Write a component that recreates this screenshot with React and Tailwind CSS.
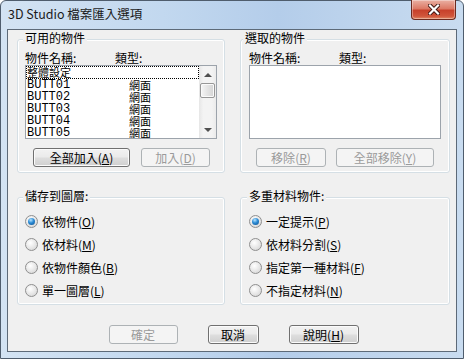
import React from "react";

const U = ({ c }) => (
  <>
    (<span className="underline underline-offset-[1px]">{c}</span>)
  </>
);

const Btn = ({ children, disabled, className = "" }) => (
  <div
    className={`flex h-[19px] items-center justify-center rounded-[3px] border text-[12px] leading-none ${
      disabled
        ? "border-[#adb2b5] bg-[#f4f4f4] text-[#9a9a9a]"
        : "border-[#707070] bg-[linear-gradient(#f2f2f2_0%,#ebebeb_45%,#dddddd_55%,#cfcfcf_100%)] text-black shadow-[inset_0_0_0_1px_#fbfbfb]"
    } ${className}`}
  >
    {children}
  </div>
);

const Group = ({ title, titleClass = "", className = "", children }) => (
  <div className={`rounded-[3px] border border-[#d5dfe5] shadow-[inset_0_0_0_1px_#ffffff] ${className}`}>
    <div className={`-mt-[9px] w-fit bg-[#f0f0f0] px-[2px] text-[12px] leading-[14px] ${titleClass}`}>{title}</div>
    {children}
  </div>
);

const Radio = ({ checked, children }) => (
  <div className="flex h-[23px] items-center">
    <span className="flex h-[13px] w-[13px] items-center justify-center rounded-full border border-[#8f8f8f] bg-[radial-gradient(circle_at_40%_35%,#ffffff_0%,#e8e8e8_50%,#cfcfcf_100%)]">
      {checked && (
        <span className="h-[7px] w-[7px] rounded-full bg-[radial-gradient(circle_at_40%_30%,#b7e4ff_0%,#2a8ad4_45%,#0f4f8c_100%)]" />
      )}
    </span>
    <span className="ml-[4px] text-[12px] leading-[14px]">{children}</span>
  </div>
);

const Scrollbar = () => (
  <div className="flex h-full w-[17px] flex-col items-center bg-[linear-gradient(90deg,#e6e6e6,#f3f3f3_25%,#f3f3f3_75%,#ebebeb)]">
    <div className="flex h-[17px] w-full items-center justify-center">
      <span className="h-0 w-0 border-x-[4px] border-b-[4px] border-x-transparent border-b-[#505050]" />
    </div>
    <div className="h-[15px] w-[15px] rounded-[2px] border border-[#979797] bg-[linear-gradient(90deg,#f6f6f6,#e4e4e4_50%,#d4d4d4)] shadow-[inset_0_0_0_1px_#fafafa]" />
    <div className="flex-1" />
    <div className="flex h-[17px] w-full items-center justify-center">
      <span className="h-0 w-0 border-x-[4px] border-t-[4px] border-x-transparent border-t-[#505050]" />
    </div>
  </div>
);

const rows = ["BUTT01", "BUTT02", "BUTT03", "BUTT04", "BUTT05"];

const Header = () => (
  <div className="mt-[7px] flex h-[12px] text-[12px] leading-[12px]">
    <span className="w-[90px]">物件名稱:</span>
    <span>類型:</span>
  </div>
);

export default function App() {
  return (
    <div className="flex h-[359px] w-[464px] flex-col rounded-t-[6px] border border-[#4f5d6d] bg-[linear-gradient(90deg,#d3e3f3_0%,#c2d8ef_35%,#b4cdea_60%,#c9dcf0_100%)] px-[6px] pb-[6px] font-['Noto_Sans_CJK_TC',sans-serif] text-black">
      <div className="flex h-[28px] items-start">
        <div className="pl-[1px] pt-[6px] text-[12.5px] leading-[14px] text-[#1b1b1b]">3D Studio 檔案匯入選項</div>
        <div className="-mt-[1px] ml-auto mr-[1px] flex h-[20px] w-[45px] items-center justify-center rounded-b-[4px] border border-t-0 border-[#6b2a1f] bg-[linear-gradient(#eab0a3_0%,#dc7a66_45%,#c7412b_55%,#d0553b_85%,#e08a66_100%)] shadow-[inset_0_0_0_1px_rgba(255,255,255,0.35)]">
          <svg width="12" height="11" viewBox="0 0 12 11">
            <path d="M2 1.5 L10 9.5 M10 1.5 L2 9.5" stroke="#3a1410" strokeWidth="4" strokeLinecap="square" />
            <path d="M2 1.5 L10 9.5 M10 1.5 L2 9.5" stroke="#ffffff" strokeWidth="2.2" strokeLinecap="square" />
          </svg>
        </div>
      </div>

      <div className="flex flex-1 flex-col border border-[#5d6a78] bg-[#f0f0f0] pl-[9px] pr-[6px] pt-[9px]">
        <div className="flex gap-[15px]">
          <Group className="h-[134px] w-[208px]" titleClass="ml-[5px]" title="可用的物件">
            <div className="pl-[7px]">
              <Header />
              <div className="mt-[1px] flex h-[74px] w-[192px] border border-[#9ca3ab] bg-white">
                <div className="flex-1 overflow-hidden font-['Liberation_Mono','Noto_Sans_CJK_TC',monospace] text-[12px] leading-[12px]">
                  <div className="flex h-[13px] items-center pl-[1px] text-[11px] leading-[11px] outline-1 -outline-offset-1 outline-dotted outline-black font-['Noto_Sans_CJK_TC',sans-serif]">
                    整體設定
                  </div>
                  {rows.map((r) => (
                    <div key={r} className="flex h-[12px] items-center">
                      <span className="w-[103px] pl-[1px]">{r}</span>
                      <span className="text-[11px] leading-[11px] font-['Noto_Sans_CJK_TC',sans-serif]">網面</span>
                    </div>
                  ))}
                </div>
                <Scrollbar />
              </div>
              <div className="mt-[9px] flex gap-[11px] pl-[8px]">
                <Btn className="w-[97px]">全部加入<U c="A" /></Btn>
                <Btn disabled className="w-[69px]">加入<U c="D" /></Btn>
              </div>
            </div>
          </Group>

          <Group className="h-[134px] w-[210px]" titleClass="ml-[2px]" title="選取的物件">
            <div className="pl-[8px]">
              <Header />
              <div className="mt-[1px] h-[74px] w-[192px] border border-[#9ca3ab] bg-white" />
              <div className="mt-[9px] flex gap-[10px] pl-[7px]">
                <Btn disabled className="w-[70px]">移除<U c="R" /></Btn>
                <Btn disabled className="w-[98px]">全部移除<U c="Y" /></Btn>
              </div>
            </div>
          </Group>
        </div>

        <div className="mt-[24px] flex gap-[15px]">
          <Group className="h-[108px] w-[208px]" titleClass="ml-[5px]" title="儲存到圖層:">
            <div className="mt-[7px] pl-[7px]">
              <Radio checked>依物件<U c="O" /></Radio>
              <Radio>依材料<U c="M" /></Radio>
              <Radio>依物件顏色<U c="B" /></Radio>
              <Radio>單一圖層<U c="L" /></Radio>
            </div>
          </Group>
          <Group className="h-[108px] w-[210px]" titleClass="ml-[6px]" title="多重材料物件:">
            <div className="mt-[7px] pl-[8px]">
              <Radio checked>一定提示<U c="P" /></Radio>
              <Radio>依材料分割<U c="S" /></Radio>
              <Radio>指定第一種材料<U c="F" /></Radio>
              <Radio>不指定材料<U c="N" /></Radio>
            </div>
          </Group>
        </div>

        <div className="mt-[20px] flex justify-center gap-[30px]">
          <Btn disabled className="w-[69px]">確定</Btn>
          <Btn className="w-[51px]">取消</Btn>
          <Btn className="w-[70px]">說明<U c="H" /></Btn>
        </div>
      </div>
    </div>
  );
}
